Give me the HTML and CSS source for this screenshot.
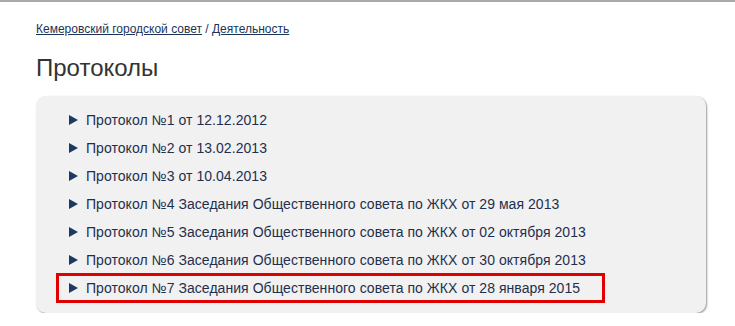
FILE: index.html
```html
<!DOCTYPE html>
<html lang="ru">
<head>
  <meta charset="UTF-8">
  <title>Протоколы</title>
  <link rel="stylesheet" href="styles.css">
</head>
<body>
  <div class="page">
    <div class="breadcrumbs">
      <a href="#">Кемеровский городской совет</a> / <a href="#">Деятельность</a>
    </div>
    <h1>Протоколы</h1>
    <div class="docs">
      <ul class="doc-list">
        <li><a href="#">Протокол №1 от 12.12.2012</a></li>
        <li><a href="#">Протокол №2 от 13.02.2013</a></li>
        <li><a href="#">Протокол №3 от 10.04.2013</a></li>
        <li><a href="#">Протокол №4 Заседания Общественного совета по ЖКХ от 29 мая 2013</a></li>
        <li><a href="#">Протокол №5 Заседания Общественного совета по ЖКХ от 02 октября 2013</a></li>
        <li><a href="#">Протокол №6 Заседания Общественного совета по ЖКХ от 30 октября 2013</a></li>
        <li class="marked"><a href="#">Протокол №7 Заседания Общественного совета по ЖКХ от 28 января 2015</a></li>
      </ul>
    </div>
  </div>
</body>
</html>
```
FILE: styles.css
```css
body {
  margin: 0;
  font-family: 'Liberation Sans', Arial, sans-serif;
  background: #fff;
  color: #333;
  border-top: 2px solid #a9a9a9;
}
.page {
  width: 670px;
  padding: 19px 0 0 36px;
}
.breadcrumbs {
  font-size: 12px;
  color: #1b3358;
  line-height: 16px;
}
.breadcrumbs a {
  color: #1b3358;
  text-decoration: underline;
}
h1 {
  font-size: 24px;
  font-weight: normal;
  color: #333;
  margin: 16px 0 0;
  line-height: 30px;
}
.docs {
  margin-top: 13px;
  background: #f1f1f1;
  border-radius: 10px;
  box-shadow: 1px 1px 2px #9a9a9a;
  padding: 10px 0 10px;
}
.doc-list {
  list-style: none;
  margin: 0;
  padding: 0 0 0 33px;
}
.doc-list li {
  display: flex;
  align-items: center;
  height: 28px;
  font-size: 14px;
  letter-spacing: 0.05px;
}
.doc-list li::before {
  content: "";
  border-left: 9px solid #1c3a60;
  border-top: 5px solid transparent;
  border-bottom: 5px solid transparent;
  margin-right: 8px;
}
.doc-list a {
  color: #1f2f4d;
  text-decoration: none;
}
.doc-list li.marked {
  width: fit-content;
  box-sizing: border-box;
  height: 30px;
  margin: -1px 0 0 -13px;
  padding: 0 22px 0 10px;
  border: 3px solid #e00000;
}
```
